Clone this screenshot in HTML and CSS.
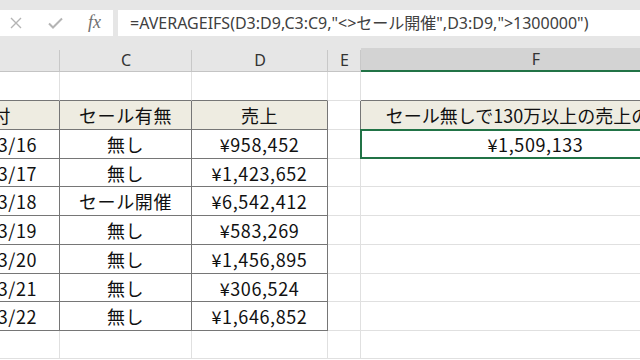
FILE: index.html
```html
<!DOCTYPE html>
<html lang="ja">
<head>
<meta charset="utf-8">
<title>AVERAGEIFS</title>
<link rel="stylesheet" href="styles.css">
</head>
<body>
<div class="screen">
  <div class="toolbar">
    <div class="fb-icons">
      <svg class="ic ic-x" width="12" height="12" viewBox="0 0 12 12"><path d="M1 1 L11 11 M11 1 L1 11" stroke="#b4b4b4" stroke-width="1.4" fill="none"/></svg>
      <svg class="ic ic-ok" width="15" height="12" viewBox="0 0 15 12"><path d="M1 6.5 L5 10.5 L14 1.5" stroke="#b4b4b4" stroke-width="2" fill="none"/></svg>
      <span class="fx">fx</span>
    </div>
    <div class="fb-input">=AVERAGEIFS(D3:D9,C3:C9,"&lt;&gt;セール開催",D3:D9,"&gt;1300000")</div>
  </div>
  <div class="sheet">
    <div class="grid">
      <div class="ch"></div><div class="ch">C</div><div class="ch">D</div><div class="ch">E</div><div class="ch sel">F</div>

      <div class="c tb"></div><div class="c tb"></div><div class="c tb"></div><div class="c"></div><div class="c tb"></div>

      <div class="c t hd">日付</div><div class="c t hd">セール有無</div><div class="c t hd">売上</div><div class="c rd"></div><div class="c t hd wide">セール無しで130万以上の売上の平均</div>

      <div class="c t">2020/3/16</div><div class="c t">無し</div><div class="c t">¥958,452</div><div class="c rd"></div><div class="c t act">¥1,509,133<span class="selbox"></span></div>

      <div class="c t">2020/3/17</div><div class="c t">無し</div><div class="c t">¥1,423,652</div><div class="c"></div><div class="c"></div>

      <div class="c t">2020/3/18</div><div class="c t">セール開催</div><div class="c t">¥6,542,412</div><div class="c"></div><div class="c"></div>

      <div class="c t">2020/3/19</div><div class="c t">無し</div><div class="c t">¥583,269</div><div class="c"></div><div class="c"></div>

      <div class="c t">2020/3/20</div><div class="c t">無し</div><div class="c t">¥1,456,895</div><div class="c"></div><div class="c"></div>

      <div class="c t">2020/3/21</div><div class="c t">無し</div><div class="c t">¥306,524</div><div class="c"></div><div class="c"></div>

      <div class="c t">2020/3/22</div><div class="c t">無し</div><div class="c t">¥1,646,852</div><div class="c"></div><div class="c"></div>

      <div class="c"></div><div class="c"></div><div class="c"></div><div class="c"></div><div class="c"></div>
    </div>
  </div>
</div>
</body>
</html>
```

FILE: styles.css
```css
* { box-sizing: border-box; }
html, body { margin: 0; padding: 0; }
body {
  width: 640px;
  height: 360px;
  overflow: hidden;
  background: #ffffff;
  font-family: "Noto Sans", "Noto Sans CJK JP", sans-serif;
}
.screen {
  width: 640px;
  height: 360px;
  overflow: hidden;
  display: flex;
  flex-direction: column;
}
.toolbar {
  background: #e6e6e6;
  padding: 10px 0 12px 0;
  display: flex;
  gap: 5px;
  height: 48px;
}
.fb-icons {
  width: 113px;
  background: #ffffff;
  display: flex;
  align-items: center;
  padding-left: 10px;
}
.ic-x { margin-right: 26px; }
.ic-ok { margin-right: 25px; }
.fx {
  font-family: "Liberation Serif", "DejaVu Serif", serif;
  font-style: italic;
  font-size: 18px;
  color: #6f6f6f;
  margin-top: -2px;
}
.fb-input {
  flex: 1;
  background: #ffffff;
  padding-left: 12px;
  font-size: 16px;
  color: #404040;
  line-height: 26px;
  white-space: nowrap;
  overflow: hidden;
}
.sheet {
  flex: 1;
  overflow: hidden;
}
.grid {
  margin-left: -74px;
  display: grid;
  grid-template-columns: 134px 132px 136px 33px 350px;
  grid-template-rows: 24px 29px 29px 29px 28px 29px 29px 29px 28px 29px 28px;
}
.ch {
  background: #e6e6e6;
  border-bottom: 1px solid #c4c4c4;
  position: relative;
  display: flex;
  align-items: center;
  justify-content: center;
  font-size: 16px;
  color: #333333;
}
.ch::after {
  content: "";
  position: absolute;
  right: 0;
  top: 2px;
  bottom: 0;
  width: 1px;
  background: #c8c8c8;
}
.ch.sel {
  background: #d3d3d3;
  border-bottom: 2px solid #217346;
}
.c {
  border-right: 1px solid #e0e0e0;
  border-bottom: 1px solid #e0e0e0;
  display: flex;
  align-items: center;
  justify-content: center;
  font-family: "Noto Sans CJK JP", sans-serif;
  font-size: 18px;
  letter-spacing: 0.6px;
  color: #111111;
  white-space: nowrap;
}
.c.tb { border-bottom-color: #767676; }
.c.rd { border-right-color: #767676; }
.c.t {
  border-right-color: #767676;
  border-bottom-color: #767676;
}
.c.hd { background: #eeece1; }
.c.wide { overflow: visible; letter-spacing: 0; }
.c.act { position: relative; }
.selbox {
  position: absolute;
  left: -1px;
  top: -1px;
  right: -1px;
  bottom: -1px;
  border: 2px solid #217346;
}
```
